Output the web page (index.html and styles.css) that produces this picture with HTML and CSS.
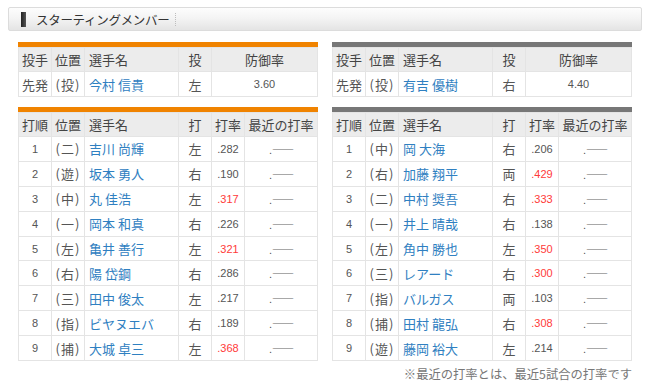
FILE: index.html
```html
<!DOCTYPE html>
<html lang="ja">
<head>
<meta charset="utf-8">
<link rel="stylesheet" href="styles.css">
</head>
<body>
<div class="page">
  <div class="title">
    <span class="mark"></span>
    <span class="title-text">スターティングメンバー</span>
    <span class="sep"></span>
  </div>
  <div class="tables">
    <div class="side">
      <div class="bar orange">
        <table class="stats pitcher">
          <tr class="head"><th class="c">投手</th><th class="c">位置</th><th class="l">選手名</th><th class="c">投</th><th class="c">防御率</th></tr>
          <tr><td class="c">先発</td><td class="pos">(投)</td><td class="name">今村 信貴</td><td class="c">左</td><td class="num">3.60</td></tr>
        </table>
      </div>
      <div class="bar orange">
        <table class="stats batting">
          <tr class="head"><th class="c">打順</th><th class="c">位置</th><th class="l">選手名</th><th class="c">打</th><th class="c">打率</th><th class="c">最近の打率</th></tr>
          <tr><td class="num">1</td><td class="pos">(二)</td><td class="name">吉川 尚輝</td><td class="c">左</td><td class="num">.282</td><td class="recent">.<span class="dash">――</span></td></tr>
          <tr><td class="num">2</td><td class="pos">(遊)</td><td class="name">坂本 勇人</td><td class="c">右</td><td class="num">.190</td><td class="recent">.<span class="dash">――</span></td></tr>
          <tr><td class="num">3</td><td class="pos">(中)</td><td class="name">丸 佳浩</td><td class="c">左</td><td class="num red">.317</td><td class="recent">.<span class="dash">――</span></td></tr>
          <tr><td class="num">4</td><td class="pos">(一)</td><td class="name">岡本 和真</td><td class="c">右</td><td class="num">.226</td><td class="recent">.<span class="dash">――</span></td></tr>
          <tr><td class="num">5</td><td class="pos">(左)</td><td class="name">亀井 善行</td><td class="c">左</td><td class="num red">.321</td><td class="recent">.<span class="dash">――</span></td></tr>
          <tr><td class="num">6</td><td class="pos">(右)</td><td class="name">陽 岱鋼</td><td class="c">右</td><td class="num">.286</td><td class="recent">.<span class="dash">――</span></td></tr>
          <tr><td class="num">7</td><td class="pos">(三)</td><td class="name">田中 俊太</td><td class="c">左</td><td class="num">.217</td><td class="recent">.<span class="dash">――</span></td></tr>
          <tr><td class="num">8</td><td class="pos">(指)</td><td class="name">ビヤヌエバ</td><td class="c">右</td><td class="num">.189</td><td class="recent">.<span class="dash">――</span></td></tr>
          <tr><td class="num">9</td><td class="pos">(捕)</td><td class="name">大城 卓三</td><td class="c">左</td><td class="num red">.368</td><td class="recent">.<span class="dash">――</span></td></tr>
        </table>
      </div>
    </div>
    <div class="side">
      <div class="bar gray">
        <table class="stats pitcher">
          <tr class="head"><th class="c">投手</th><th class="c">位置</th><th class="l">選手名</th><th class="c">投</th><th class="c">防御率</th></tr>
          <tr><td class="c">先発</td><td class="pos">(投)</td><td class="name">有吉 優樹</td><td class="c">右</td><td class="num">4.40</td></tr>
        </table>
      </div>
      <div class="bar gray">
        <table class="stats batting">
          <tr class="head"><th class="c">打順</th><th class="c">位置</th><th class="l">選手名</th><th class="c">打</th><th class="c">打率</th><th class="c">最近の打率</th></tr>
          <tr><td class="num">1</td><td class="pos">(中)</td><td class="name">岡 大海</td><td class="c">右</td><td class="num">.206</td><td class="recent">.<span class="dash">――</span></td></tr>
          <tr><td class="num">2</td><td class="pos">(右)</td><td class="name">加藤 翔平</td><td class="c">両</td><td class="num red">.429</td><td class="recent">.<span class="dash">――</span></td></tr>
          <tr><td class="num">3</td><td class="pos">(二)</td><td class="name">中村 奨吾</td><td class="c">右</td><td class="num red">.333</td><td class="recent">.<span class="dash">――</span></td></tr>
          <tr><td class="num">4</td><td class="pos">(一)</td><td class="name">井上 晴哉</td><td class="c">右</td><td class="num">.138</td><td class="recent">.<span class="dash">――</span></td></tr>
          <tr><td class="num">5</td><td class="pos">(左)</td><td class="name">角中 勝也</td><td class="c">左</td><td class="num red">.350</td><td class="recent">.<span class="dash">――</span></td></tr>
          <tr><td class="num">6</td><td class="pos">(三)</td><td class="name">レアード</td><td class="c">右</td><td class="num red">.300</td><td class="recent">.<span class="dash">――</span></td></tr>
          <tr><td class="num">7</td><td class="pos">(指)</td><td class="name">バルガス</td><td class="c">両</td><td class="num">.103</td><td class="recent">.<span class="dash">――</span></td></tr>
          <tr><td class="num">8</td><td class="pos">(捕)</td><td class="name">田村 龍弘</td><td class="c">右</td><td class="num red">.308</td><td class="recent">.<span class="dash">――</span></td></tr>
          <tr><td class="num">9</td><td class="pos">(遊)</td><td class="name">藤岡 裕大</td><td class="c">左</td><td class="num">.214</td><td class="recent">.<span class="dash">――</span></td></tr>
        </table>
      </div>
    </div>
  </div>
  <p class="note">※最近の打率とは、最近5試合の打率です</p>
</div>
</body>
</html>
```

FILE: styles.css
```css
html, body {
  margin: 0;
  padding: 0;
  background: #fff;
}

body {
  font-family: "Noto Sans CJK JP", "Liberation Sans", sans-serif;
  color: #444;
}

.page {
  padding: 7px 8px 0 8px;
}

.title {
  height: 24px;
  box-sizing: border-box;
  border: 1px solid #dcdcdc;
  border-radius: 2px;
  background: linear-gradient(#fdfdfd, #f4f4f4 45%, #e4e4e4);
  display: flex;
  align-items: center;
  padding-left: 12px;
}

.mark {
  width: 5px;
  height: 15px;
  background: linear-gradient(90deg, #222, #555);
}

.title-text {
  margin-left: 10px;
  font-size: 12.5px;
  color: #333;
  letter-spacing: -0.3px;
}

.sep {
  margin-left: 6px;
  height: 13px;
  border-left: 1px dotted #bdbdbd;
}

.tables {
  display: grid;
  grid-template-columns: 300px 300px;
  column-gap: 14px;
  padding: 11px 10px 0 10px;
}

.side {
  display: flex;
  flex-direction: column;
  gap: 10px;
}

.bar {
  border-top: 5px solid #f08300;
}

.bar.gray {
  border-top-color: #777;
}

.stats {
  width: 300px;
  border-collapse: collapse;
  table-layout: fixed;
  font-size: 13px;
}

.stats th,
.stats td {
  border: 1px solid #e4e4e4;
  padding: 0 3px;
  white-space: nowrap;
  overflow: hidden;
  font-weight: normal;
}

.stats th {
  background: #ececec;
  color: #444;
  height: 24px;
  box-sizing: border-box;
}

.pitcher td {
  height: 24px;
}

.batting td {
  height: 23.9px;
}

.stats .c { text-align: center; }
.stats .l { text-align: left; padding-left: 4px; }

.stats td.c { color: #555; }

.stats td.pos {
  text-align: center;
  color: #555;
  padding: 0;
  letter-spacing: 1px;
}

.stats td.name {
  color: #2f80c1;
  padding-left: 4px;
}

.stats td.num {
  text-align: center;
  font-family: "Liberation Sans", sans-serif;
  font-size: 11px;
  color: #555;
}

.stats td.red { color: #ff3a3a; }

.stats td.recent {
  text-align: center;
  font-family: "Liberation Sans", sans-serif;
  font-size: 11px;
  color: #555;
}

.dash {
  font-family: "Noto Sans CJK JP", sans-serif;
  font-size: 11px;
  letter-spacing: -1px;
  color: #666;
}

.pitcher th:nth-child(1), .batting th:nth-child(1) { width: 33px; }
.pitcher th:nth-child(2), .batting th:nth-child(2) { width: 33px; }
.pitcher th:nth-child(3), .batting th:nth-child(3) { width: 94px; }
.pitcher th:nth-child(4), .batting th:nth-child(4) { width: 33px; }
.batting th:nth-child(5) { width: 33px; }

.note {
  margin: 5px 10px 0 0;
  text-align: right;
  font-size: 12.3px;
  color: #777;
  line-height: 16px;
}
```
